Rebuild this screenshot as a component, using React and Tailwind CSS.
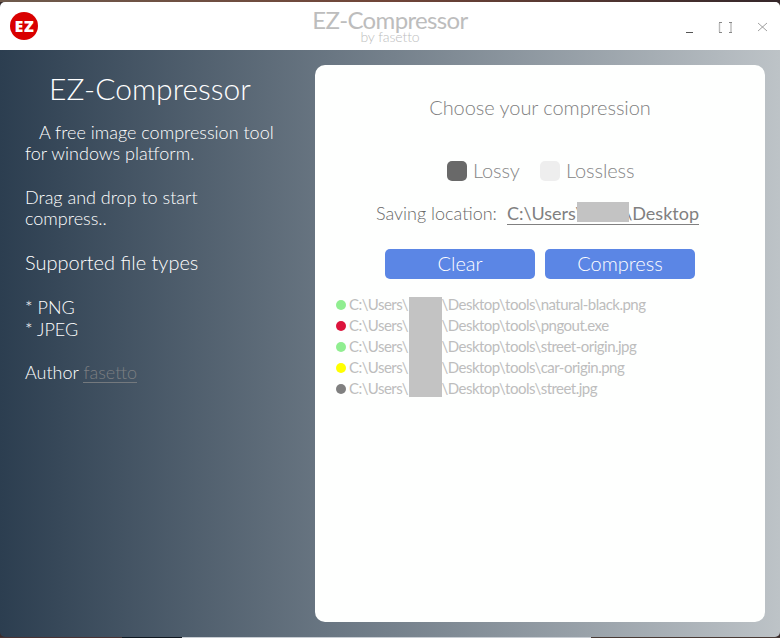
const files = [
  { dot: 'bg-[#90ee90]', name: 'natural-black.png' },
  { dot: 'bg-[#dc143c]', name: 'pngout.exe' },
  { dot: 'bg-[#90ee90]', name: 'street-origin.jpg' },
  { dot: 'bg-[#ffff00]', name: 'car-origin.png' },
  { dot: 'bg-[#808080]', name: 'street.jpg' },
];

function Logo() {
  return (
    <div className="flex h-7 w-7 items-center justify-center rounded-full bg-[#d90000] pl-px font-['Open_Sans',sans-serif] text-[16px] leading-none font-extrabold tracking-[0.8px] text-white">
      EZ
    </div>
  );
}

function TitleBar() {
  return (
    <header className="grid h-12 shrink-0 grid-cols-[1fr_auto_1fr] bg-white">
      <div className="pt-[10px] pl-[10px]">
        <Logo />
      </div>
      <div className="flex flex-col items-center text-[#bdbdbd]">
        <div className="mt-[7px] text-[24px] leading-[22px] font-normal tracking-[-0.65px]">EZ-Compressor</div>
        <div className="-mt-px text-[14px] leading-[14px] font-light tracking-[-0.1px]">by fasetto</div>
      </div>
      <div className="flex justify-end">
        <svg width="94" height="48" viewBox="686 2 94 48" fill="none">
          <path d="M686 32.5h7" stroke="#555" />
          <path d="M719.5 23v9M731 23v9" stroke="#bbb" strokeWidth="1.4" />
          <path d="M719 22.5h3M719 32.5h3M729 22.5h3M729 32.5h3" stroke="#888" />
          <path d="M758 23l9 8M767 23l-9 8" stroke="#888" strokeWidth="0.8" />
        </svg>
      </div>
    </header>
  );
}

function Sidebar() {
  return (
    <aside className="w-[300px] shrink-0 pl-[25px] text-[18px] leading-[21px] font-light text-white">
      <h1 className="mt-[19px] h-[38px] w-[250px] text-center text-[30px] leading-[38px] font-light">EZ-Compressor</h1>
      <p className="mt-[15px] w-[262px] indent-[14px]">
        A free image compression tool<br />for windows platform.
      </p>
      <p className="mt-[23px]">Drag and drop to start<br />compress..</p>
      <h2 className="mt-[21px] text-[20px] leading-[24px] font-light">Supported file types</h2>
      <p className="mt-[22px] leading-[22px]">* PNG<br />* JPEG</p>
      <p className="mt-[21px] leading-[22px]">
        Author <span className="inline-block h-[22px] border-b border-[#74797e] text-[#7c7f82]">fasetto</span>
      </p>
    </aside>
  );
}

function Options() {
  return (
    <div className="mt-[40px] ml-[132px] flex h-6 items-center text-[20px] leading-6 font-light tracking-[-0.1px] text-[#858585]">
      <span className="h-5 w-5 rounded-[5px] bg-[#696969]" />
      <span className="-mt-[2px] ml-[6px] w-[67px]">Lossy</span>
      <span className="h-5 w-5 rounded-[5px] bg-[#eeeeee]" />
      <span className="-mt-[2px] ml-[6px]">Lossless</span>
    </div>
  );
}

function Location() {
  return (
    <div className="mt-[19px] ml-[61px] flex h-[23px] text-[18px] leading-[22px] whitespace-nowrap text-[#808080]">
      <span className="w-[131px] font-light text-[#696969]">Saving location:</span>
      <span className="relative flex h-[23px] w-[192px] justify-between border-b border-[#808080]">
        <span>C:\Users\</span>
        <span>\Desktop</span>
        <span className="absolute top-0 left-[70px] h-5 w-[52px] bg-[#c3c3c3]" />
      </span>
    </div>
  );
}

function FileList() {
  return (
    <div className="relative mt-4 ml-[21px] text-[15px] leading-[21px] tracking-[-0.52px] text-[#bdbdbd]">
      {files.map((f) => (
        <div key={f.name} className="flex h-[21px] items-center whitespace-nowrap">
          <span className={`-mt-px h-[10px] w-[10px] rounded-full ${f.dot}`} />
          <span className="-mt-[2px] ml-[3px] w-[60px]">C:\Users\</span>
          <span className="-mt-[2px] ml-[32.5px]">\Desktop\tools\{f.name}</span>
        </div>
      ))}
      <div className="absolute top-[2px] left-[73px] h-[100px] w-[33px] bg-[#c3c3c3]" />
    </div>
  );
}

export default function App() {
  return (
    <div className="flex h-[638px] w-[780px] flex-col overflow-hidden bg-[#392b2b] font-['Lato',sans-serif]">
      <div className="h-[2px] shrink-0 bg-[linear-gradient(90deg,#6e5a4c,#704538,#35272a)]" />
      <div className="flex h-[635px] flex-col overflow-hidden rounded-[5px] bg-[linear-gradient(90deg,#2c3e50,#bdc3c7)]">
        <TitleBar />
        <div className="flex flex-1">
          <Sidebar />
          <main className="mt-[15px] ml-[15px] h-[557px] w-[450px] rounded-[10px] bg-[#fefffe]">
            <h2 className="mt-[30px] text-center text-[20px] leading-6 font-light tracking-[-0.05px] text-[#808080]">Choose your compression</h2>
            <Options />
            <Location />
            <div className="mt-6 flex justify-center gap-[10px] text-[20px] leading-[28px] font-light text-white">
              <button className="h-[30px] w-[150px] rounded-[5px] bg-[#5b86e5] pb-[2px]">Clear</button>
              <button className="h-[30px] w-[150px] rounded-[5px] bg-[#5b86e5] pb-[2px]">Compress</button>
            </div>
            <FileList />
          </main>
        </div>
      </div>
      <div className="flex h-px shrink-0">
        <span className="w-[122px] bg-[#493334]" />
        <span className="w-[60px] bg-[#111820]" />
        <span className="w-[409px] bg-[#c8cdd3]" />
        <span className="flex-1 bg-[#493b36]" />
      </div>
    </div>
  );
}
